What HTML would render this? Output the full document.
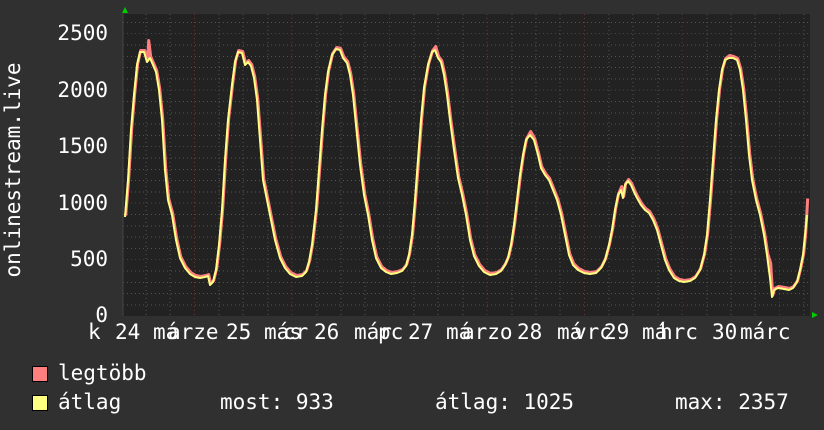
<!DOCTYPE html>
<html><head><meta charset="utf-8"><style>
html,body{margin:0;padding:0;background:#303030;width:824px;height:430px;overflow:hidden}
svg text{font-family:"DejaVu Sans Mono","Liberation Mono",monospace;fill:#fff}
</style></head><body>
<svg width="824" height="430" xmlns="http://www.w3.org/2000/svg">
<rect x="0" y="0" width="824" height="430" fill="#303030"/>
<rect x="123" y="14" width="687" height="302" fill="#222"/>
<g stroke="#555" stroke-dasharray="1,3" stroke-width="1">
<line x1="123" x2="810" y1="22.5" y2="22.5"/><line x1="123" x2="810" y1="45" y2="45"/><line x1="123" x2="810" y1="56.5" y2="56.5"/><line x1="123" x2="810" y1="67.5" y2="67.5"/><line x1="123" x2="810" y1="79" y2="79"/>
<line x1="123" x2="810" y1="101.5" y2="101.5"/><line x1="123" x2="810" y1="113" y2="113"/><line x1="123" x2="810" y1="124" y2="124"/><line x1="123" x2="810" y1="135.5" y2="135.5"/>
<line x1="123" x2="810" y1="158" y2="158"/><line x1="123" x2="810" y1="169.5" y2="169.5"/><line x1="123" x2="810" y1="180.5" y2="180.5"/><line x1="123" x2="810" y1="192" y2="192"/>
<line x1="123" x2="810" y1="214.5" y2="214.5"/><line x1="123" x2="810" y1="226" y2="226"/><line x1="123" x2="810" y1="237" y2="237"/><line x1="123" x2="810" y1="248.5" y2="248.5"/>
<line x1="123" x2="810" y1="271" y2="271"/><line x1="123" x2="810" y1="282.5" y2="282.5"/><line x1="123" x2="810" y1="293.5" y2="293.5"/><line x1="123" x2="810" y1="305" y2="305"/>
<line y1="14" y2="315" x1="146" x2="146"/><line y1="14" y2="315" x1="170" x2="170"/><line y1="14" y2="315" x1="219" x2="219"/><line y1="14" y2="315" x1="243" x2="243"/><line y1="14" y2="315" x1="268" x2="268"/>
<line y1="14" y2="315" x1="317" x2="317"/><line y1="14" y2="315" x1="341" x2="341"/><line y1="14" y2="315" x1="365" x2="365"/>
<line y1="14" y2="315" x1="414" x2="414"/><line y1="14" y2="315" x1="438" x2="438"/><line y1="14" y2="315" x1="463" x2="463"/>
<line y1="14" y2="315" x1="512" x2="512"/><line y1="14" y2="315" x1="536" x2="536"/><line y1="14" y2="315" x1="560" x2="560"/>
<line y1="14" y2="315" x1="609" x2="609"/><line y1="14" y2="315" x1="633" x2="633"/><line y1="14" y2="315" x1="658" x2="658"/>
<line y1="14" y2="315" x1="707" x2="707"/><line y1="14" y2="315" x1="731" x2="731"/><line y1="14" y2="315" x1="755" x2="755"/><line y1="14" y2="315" x1="804" x2="804"/>
</g>
<g stroke="#7a3030" stroke-dasharray="1,3" stroke-width="1">
<line x1="123" x2="810" y1="33.5" y2="33.5"/><line x1="123" x2="810" y1="90" y2="90"/><line x1="123" x2="810" y1="146.5" y2="146.5"/><line x1="123" x2="810" y1="203" y2="203"/><line x1="123" x2="810" y1="259.5" y2="259.5"/>
<line y1="14" y2="315" x1="194.5" x2="194.5"/><line y1="14" y2="315" x1="292" x2="292"/><line y1="14" y2="315" x1="389.5" x2="389.5"/><line y1="14" y2="315" x1="487" x2="487"/><line y1="14" y2="315" x1="584.5" x2="584.5"/><line y1="14" y2="315" x1="682" x2="682"/><line y1="14" y2="315" x1="779.5" x2="779.5"/>
</g>
<polyline fill="none" stroke="#ff7f7f" stroke-width="3" stroke-linejoin="round" transform="translate(0.7,-1.5)" points="125,217 128,180 131,130 134,95 137,65 140,52 144,52 147,62 148,42 150,58 153,65 156,72 159,90 162,120 165,170 168,200 172,215 176,240 180,258 185,268 190,274 195,277 200,278 205,277 208,276 210,285 213,282 216,270 219,245 222,210 225,160 228,120 232,85 235,62 238,52 242,53 245,65 248,62 251,66 254,78 257,100 260,140 263,180 267,200 271,220 275,240 280,258 285,268 290,274 296,277 302,276 306,272 309,262 312,245 316,210 319,170 322,130 325,95 328,72 332,55 336,49 340,50 343,58 347,63 350,75 353,95 356,125 360,165 364,195 368,215 372,240 376,258 381,268 386,272 391,274 397,273 402,271 406,266 409,255 412,235 415,200 418,160 421,120 424,88 428,65 432,52 435,48 438,58 441,62 444,75 447,95 450,120 454,150 458,178 462,195 466,215 470,240 474,256 479,266 484,272 490,275 496,274 501,271 505,265 508,258 511,245 514,225 517,200 520,175 523,155 526,140 530,133 534,140 538,155 541,168 545,175 549,180 553,190 557,200 561,215 565,235 569,255 573,265 578,270 584,273 590,274 596,273 601,268 605,260 609,245 612,230 615,210 618,195 621,188 623,198 625,185 628,181 631,185 634,192 637,198 641,205 645,210 649,213 653,220 657,230 661,245 665,260 669,270 674,278 679,281 684,282 690,281 695,278 700,270 704,255 707,235 710,200 713,160 716,120 719,90 722,70 725,60 729,57 733,58 737,60 740,70 743,90 746,120 749,155 752,180 756,200 760,215 764,235 767,255 770,265 772,297 774,290 778,288 784,289 789,290 793,288 797,282 800,270 803,255 805,235 807,200"/>
<polyline fill="none" stroke="#ffff80" stroke-width="2" stroke-linejoin="round" points="125,217 128,180 131,130 134,95 137,65 140,52 144,52 147,62 150,58 153,65 156,72 159,90 162,120 165,170 168,200 172,215 176,240 180,258 185,268 190,274 195,277 200,278 205,277 208,276 210,285 213,282 216,270 219,245 222,210 225,160 228,120 232,85 235,62 238,52 242,53 245,65 248,62 251,66 254,78 257,100 260,140 263,180 267,200 271,220 275,240 280,258 285,268 290,274 296,277 302,276 306,272 309,262 312,245 316,210 319,170 322,130 325,95 328,72 332,55 336,49 340,50 343,58 347,63 350,75 353,95 356,125 360,165 364,195 368,215 372,240 376,258 381,268 386,272 391,274 397,273 402,271 406,266 409,255 412,235 415,200 418,160 421,120 424,88 428,65 432,52 435,50 438,58 441,62 444,75 447,95 450,120 454,150 458,178 462,195 466,215 470,240 474,256 479,266 484,272 490,275 496,274 501,271 505,265 508,258 511,245 514,225 517,200 520,175 523,155 526,140 530,135 534,140 538,155 541,168 545,175 549,180 553,190 557,200 561,215 565,235 569,255 573,265 578,270 584,273 590,274 596,273 601,268 605,260 609,245 612,230 615,210 618,195 621,190 623,198 625,185 628,181 631,185 634,192 637,198 641,205 645,210 649,213 653,220 657,230 661,245 665,260 669,270 674,278 679,281 684,282 690,281 695,278 700,270 704,255 707,235 710,200 713,160 716,120 719,90 722,70 725,60 729,58 733,58 737,60 740,70 743,90 746,120 749,155 752,180 756,200 760,215 764,235 767,255 770,278 772,297 774,290 778,288 784,289 789,290 793,288 797,282 800,270 803,255 805,235 807,215"/>
<line x1="123" y1="14" x2="123" y2="316" stroke="#444"/>
<polygon points="122,13 128,13 125,7" fill="#0c0"/>
<polygon points="812,312 812,318 818,315" fill="#0c0"/>
<g font-size="21">
<text x="108" y="40" text-anchor="end">2500</text>
<text x="108" y="97" text-anchor="end">2000</text>
<text x="108" y="153" text-anchor="end">1500</text>
<text x="108" y="210" text-anchor="end">1000</text>
<text x="108" y="266" text-anchor="end">500</text>
<text x="108" y="322" text-anchor="end">0</text>
<text transform="translate(20,170) rotate(-90)" text-anchor="middle" font-size="21">onlinestream.live</text>
<text x="88" y="339">k</text><text x="115" y="339">24</text><text x="153" y="339">má</text><text x="168" y="339">arze</text>
<text x="226" y="339">25</text><text x="264" y="339">más</text><text x="283" y="339">cr</text><text x="314" y="339">26</text>
<text x="354" y="339">már</text><text x="378" y="339">pc</text><text x="408" y="339">27</text><text x="446" y="339">má</text><text x="462" y="339">arzo</text>
<text x="517" y="339">28</text><text x="557" y="339">má</text><text x="574" y="339">vrc</text><text x="604" y="339">29</text>
<text x="642" y="339">má</text><text x="660" y="339">hrc</text><text x="712" y="339">30</text><text x="740" y="339">márc</text>
<text x="58" y="380">legtöbb</text>
<text x="58" y="409">átlag</text>
<text x="220" y="409">most: 933</text>
<text x="435" y="409">átlag: 1025</text>
<text x="675" y="409">max: 2357</text>
</g>
<rect x="32.5" y="366.5" width="15" height="15" fill="#ff7f7f" stroke="#000"/>
<rect x="32.5" y="395.5" width="15" height="15" fill="#ffff80" stroke="#000"/>
</svg>
</body></html>
